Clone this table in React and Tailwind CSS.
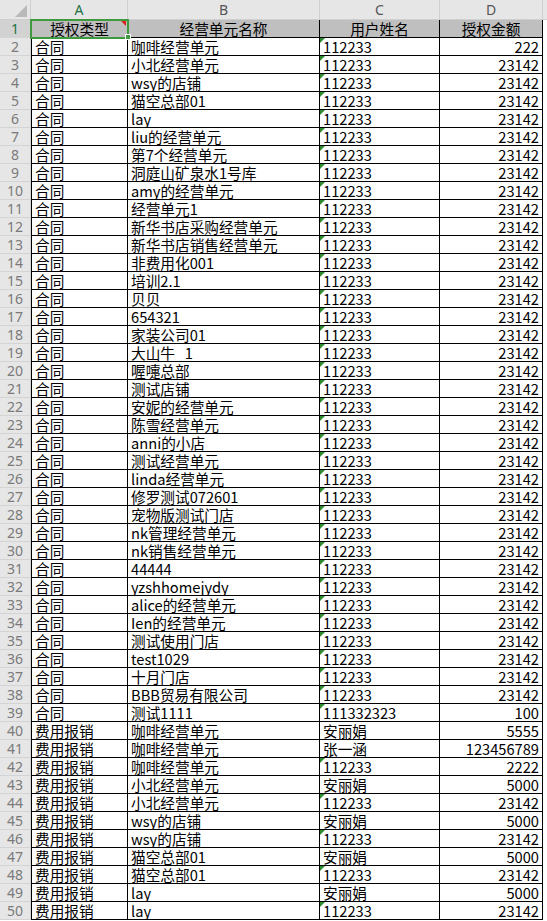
import React from 'react'

const units = [
  '咖啡经营单元',
  '小北经营单元',
  'wsy的店铺',
  '猫空总部01',
  'lay',
  'liu的经营单元',
  '第7个经营单元',
  '洞庭山矿泉水1号库',
  'amy的经营单元',
  '经营单元1',
  '新华书店采购经营单元',
  '新华书店销售经营单元',
  '非费用化001',
  '培训2.1',
  '贝贝',
  '654321',
  '家装公司01',
  '大山牛   1',
  '喔嚏总部',
  '测试店铺',
  '安妮的经营单元',
  '陈雪经营单元',
  'anni的小店',
  '测试经营单元',
  'linda经营单元',
  '修罗测试072601',
  '宠物版测试门店',
  'nk管理经营单元',
  'nk销售经营单元',
  '44444',
  'yzshhomejydy',
  'alice的经营单元',
  'Ien的经营单元',
  '测试使用门店',
  'test1029',
  '十月门店',
  'BBB贸易有限公司',
]

const rows = [
  ...units.map((u, i) => ({
    type: '合同',
    unit: u,
    user: '112233',
    amount: i === 0 ? '222' : '23142',
    flag: true,
  })),
  { type: '合同', unit: '测试1111', user: '111332323', amount: '100', flag: true },
  { type: '费用报销', unit: '咖啡经营单元', user: '安丽娟', amount: '5555' },
  { type: '费用报销', unit: '咖啡经营单元', user: '张一涵', amount: '123456789' },
  { type: '费用报销', unit: '咖啡经营单元', user: '112233', amount: '2222', flag: true },
  { type: '费用报销', unit: '小北经营单元', user: '安丽娟', amount: '5000' },
  { type: '费用报销', unit: '小北经营单元', user: '112233', amount: '23142', flag: true },
  { type: '费用报销', unit: 'wsy的店铺', user: '安丽娟', amount: '5000' },
  { type: '费用报销', unit: 'wsy的店铺', user: '112233', amount: '23142', flag: true },
  { type: '费用报销', unit: '猫空总部01', user: '安丽娟', amount: '5000' },
  { type: '费用报销', unit: '猫空总部01', user: '112233', amount: '23142', flag: true },
  { type: '费用报销', unit: 'lay', user: '安丽娟', amount: '5000' },
  { type: '费用报销', unit: 'lay', user: '112233', amount: '23142', flag: true },
]

const grid = 'grid grid-cols-[31px_97px_192px_120px_103px_1fr]'
const cell =
  'h-[18px] border-b border-r border-black px-[3px] leading-[17px] whitespace-pre overflow-hidden text-black'

function RowHead({ n, active }) {
  return (
    <div
      className={`h-[18px] border-b border-r border-[#d4d4d4] text-center leading-[17px] text-[14px] ${
        active ? 'bg-[#d2d2d2] text-[#217346]' : 'bg-[#e6e6e6] text-[#7a7a7a]'
      }`}
    >
      {n}
    </div>
  )
}

export default function App() {
  return (
    <div className="w-[547px] h-[921px] overflow-hidden bg-white font-['Noto_Sans_CJK_SC',sans-serif] text-[14.67px] text-black">
      {/* column headers */}
      <div className={`${grid} h-[20px] bg-[#e6e6e6] font-['Noto_Sans',sans-serif] text-[14px] text-[#555555]`}>
        <div className="relative border-b border-r border-[#cfcfcf]">
          <svg className="absolute left-0 top-0" width="30" height="19">
            <polygon points="15,17 27,17 27,5" fill="#b9b9b9" />
          </svg>
        </div>
        <div className="border-b border-r border-[#cfcfcf] text-center leading-[19px] text-[#217346]">A</div>
        <div className="border-b border-r border-[#cfcfcf] text-center leading-[19px]">B</div>
        <div className="border-b border-r border-[#cfcfcf] text-center leading-[19px]">C</div>
        <div className="border-b border-r border-[#cfcfcf] text-center leading-[19px]">D</div>
        <div className="border-b border-[#cfcfcf]" />
      </div>

      {/* row 1: field names */}
      <div className={grid}>
        <div className="font-['Noto_Sans',sans-serif]">
          <RowHead n={1} active />
        </div>
        <div className={`${cell} relative overflow-visible border-l bg-[#bfbfbf] text-center`}>
          授权类型
          <svg className="absolute right-[1px] top-[1px]" width="5" height="5">
            <polygon points="0,0 5,0 5,5" fill="#e0201b" />
          </svg>
          <div className="pointer-events-none absolute -left-[2px] -top-[1px] h-[20px] w-[99px] border-2 border-[#3f9a3f]" />
          <div className="absolute -right-[4px] -bottom-[3px] h-[6px] w-[6px] border border-white bg-[#3f9a3f]" />
        </div>
        <div className={`${cell} bg-[#bfbfbf] text-center`}>经营单元名称</div>
        <div className={`${cell} bg-[#bfbfbf] text-center`}>用户姓名</div>
        <div className={`${cell} bg-[#bfbfbf] text-center`}>授权金额</div>
        <div />
      </div>

      {rows.map((r, i) => (
        <div key={i} className={grid}>
          <div className="font-['Noto_Sans',sans-serif]">
            <RowHead n={i + 2} />
          </div>
          <div className={`${cell} border-l`}>{r.type}</div>
          <div className={cell}>{r.unit}</div>
          <div className={`${cell} relative`}>
            {r.flag && (
              <svg className="absolute left-0 top-0" width="5" height="5">
                <polygon points="0,0 5,0 0,5" fill="#2e8b2e" />
              </svg>
            )}
            {r.user}
          </div>
          <div className={`${cell} text-right`}>{r.amount}</div>
          <div />
        </div>
      ))}
    </div>
  )
}
